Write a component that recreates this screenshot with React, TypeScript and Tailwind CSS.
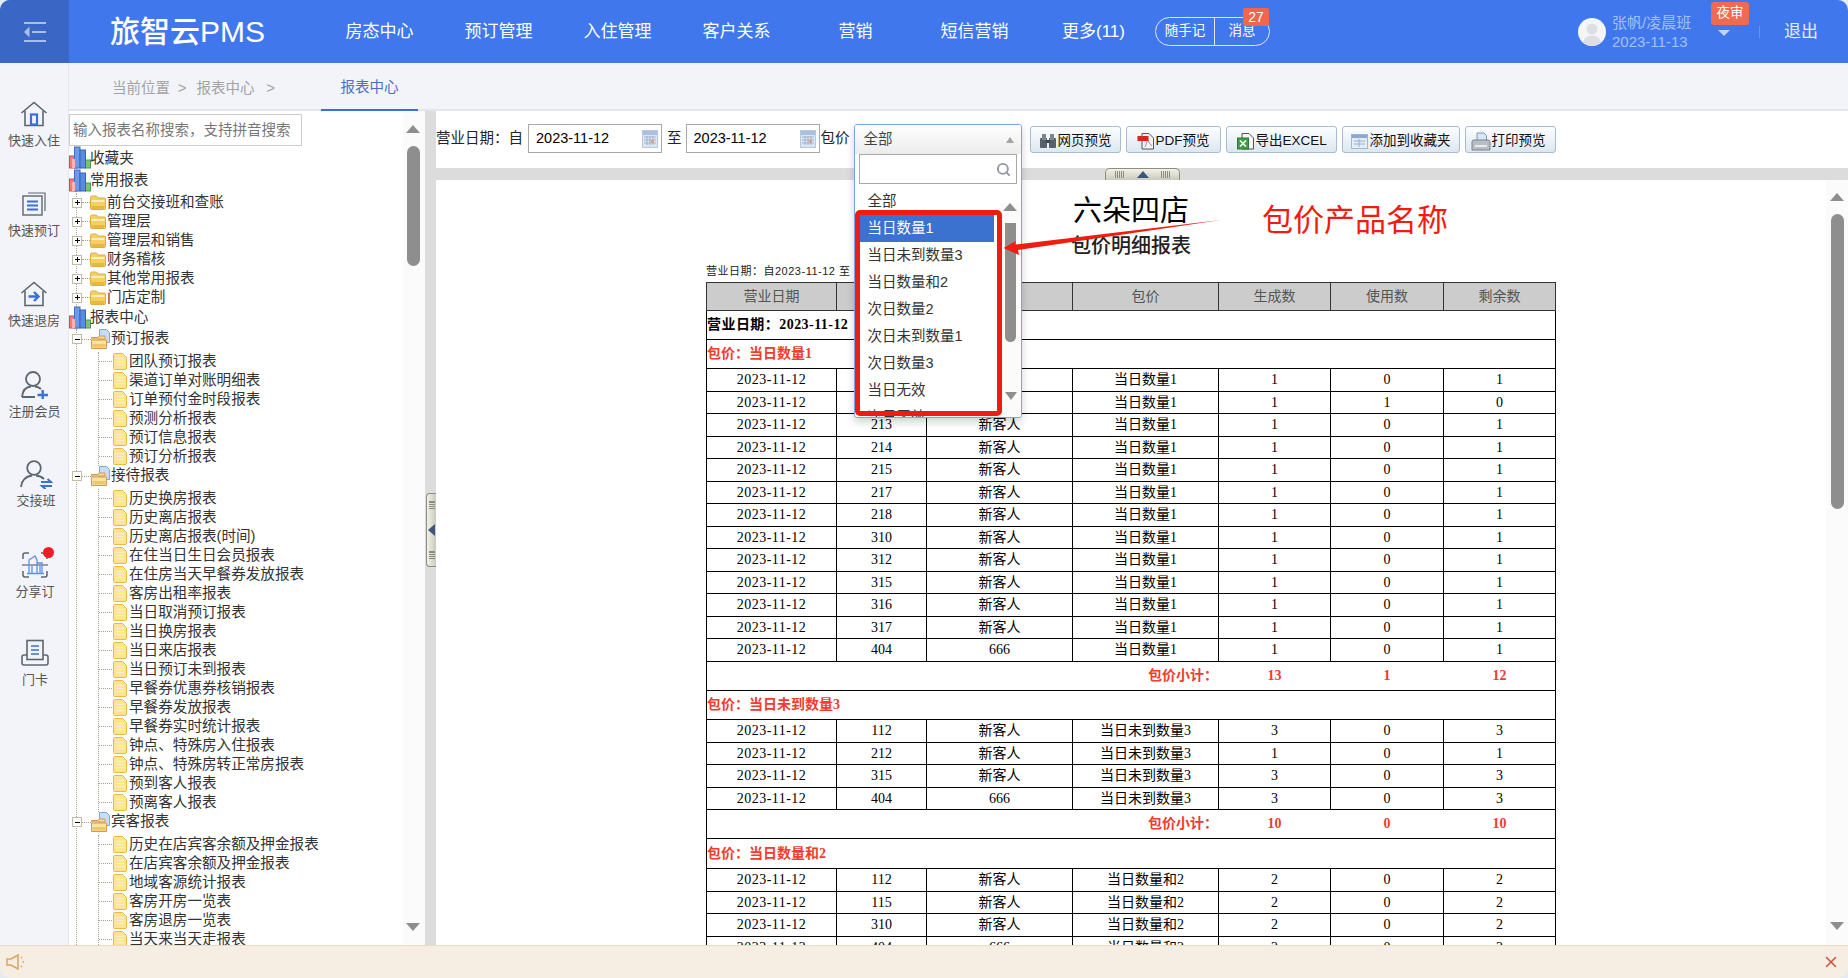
import { Search, X } from "lucide-react";

const sans = "font-['Liberation_Sans','Noto_Sans_CJK_SC',sans-serif]";
const serif = "font-['Liberation_Serif','Noto_Sans_CJK_SC',serif]";

const navItems = ["房态中心", "预订管理", "入住管理", "客户关系", "营销", "短信营销", "更多(11)"];

function RootIcon() {
  return (
    <svg width="22" height="24" viewBox="0 0 22 24" className="shrink-0">
      <rect x="0.5" y="10" width="8" height="12" fill="#f47c7c" stroke="#d9484c" />
      <rect x="16.5" y="14" width="5" height="8" fill="#7cc07a" stroke="#4c9a54" />
      <rect x="5.5" y="1" width="5.5" height="21" fill="#6d9bea" stroke="#3f6fc4" />
      <rect x="11" y="4" width="5.5" height="18" fill="#5a8ae4" stroke="#3562b8" />
      <rect x="3" y="13" width="3" height="9" fill="#fbb5b5" />
    </svg>
  );
}

function FolderIcon() {
  return (
    <svg width="16" height="16" viewBox="0 0 16 16" className="shrink-0">
      <path d="M0.5 2.5 Q0.5 1 2 1 H6.5 L8 3 H14.5 Q15.5 3 15.5 4 V13.5 Q15.5 14.5 14.5 14.5 H1.5 Q0.5 14.5 0.5 13.5 Z" fill="#f6cf62" stroke="#dcae4a" />
      <path d="M1.5 5 H14.5 V7 H1.5 Z" fill="#fdf0c0" />
      <path d="M1.5 11 H14.5 V14 H1.5 Z" fill="#e9b93e" />
    </svg>
  );
}

function FileIcon() {
  return (
    <svg width="14" height="17" viewBox="0 0 14 17" className="shrink-0">
      <path d="M1.5 0.5 H9.5 L13.5 4.5 V15 Q13.5 16.5 12 16.5 H1.5 Q0.5 16.5 0.5 15.5 V1.5 Q0.5 0.5 1.5 0.5 Z" fill="#fde591" stroke="#eab942" />
      <path d="M3 5.5 H11 M3 8.5 H11 M3 11.5 H11" stroke="#f7efcf" strokeWidth="1" />
    </svg>
  );
}

function OpenFolderIcon() {
  return (
    <svg width="19" height="20" viewBox="0 0 19 20" className="shrink-0">
      <path d="M8.5 0.5 H15.5 L18.5 3.5 V13.5 H8.5 Z" fill="#c7dcf6" stroke="#80a7dc" />
      <path d="M0.5 8.5 H7 L8 7 H14 V10 H0.5 Z" fill="#f7dc96" stroke="#d49a52" />
      <path d="M0.5 11 H15.5 V19.5 H0.5 Z" fill="#fbe3a0" stroke="#d49a52" />
      <path d="M1.5 15 H14.5 V18.5 H1.5 Z" fill="#efc76a" />
    </svg>
  );
}

function PlusMinus({ open }: { open?: boolean }) {
  return (
    <span className="relative -ml-[5px] h-[10px] w-[10px] shrink-0 border border-[#c2bba8] bg-white">
      <span className="absolute left-[1.5px] top-[3.5px] h-[1px] w-[5px] bg-black" />
      {!open && <span className="absolute left-[3.5px] top-[1.5px] h-[5px] w-[1px] bg-black" />}
    </span>
  );
}

function RootRow({ label, className }: { label: string; className: string }) {
  return (
    <div className={"flex items-center " + className}>
      <RootIcon />
      <span className="-ml-[1px]">{label}</span>
    </div>
  );
}

function Folder({ label }: { label: string }) {
  return (
    <div className="flex h-[19px] items-center">
      <PlusMinus />
      <span className="w-[8px] border-t border-dotted border-[#a8a08c]" />
      <FolderIcon />
      <span className="ml-[1px]">{label}</span>
    </div>
  );
}

function Group({ label, items }: { label: string; items: string[] }) {
  return (
    <div>
      <div className="flex h-[23px] items-center pb-[3px]">
        <PlusMinus open />
        <span className="w-[9px] border-t border-dotted border-[#a8a08c]" />
        <OpenFolderIcon />
        <span className="ml-[1px] -mt-[1px]">{label}</span>
      </div>
      <div className="ml-[21px] border-l border-dotted border-[#a8a08c]">
        {items.map((name) => (
          <div key={name} className="flex h-[19px] items-center whitespace-nowrap">
            <span className="w-[13px] border-t border-dotted border-[#a8a08c]" />
            <span className="ml-[1px]"><FileIcon /></span>
            <span className="ml-[2px]">{name}</span>
          </div>
        ))}
      </div>
    </div>
  );
}

function Tree() {
  return (
    <div className="relative h-full w-[356px] shrink-0 overflow-hidden bg-white">
      <div className="mt-[3px] flex h-[32px] w-[233px] items-center border border-[#cccccc] pl-[3px] pt-[2px] text-[14.5px] text-[#777]">输入报表名称搜索，支持拼音搜索</div>
      <div className="mt-[1px] text-[14.6px] leading-none text-[#333]">
        <RootRow label="收藏夹" className="h-[22px]" />
        <RootRow label="常用报表" className="h-[23px]" />
        <div className="ml-[7px] mt-[1px] border-l border-dotted border-[#a8a08c]">
          <Folder label="前台交接班和查账" />
          <Folder label="管理层" />
          <Folder label="管理层和销售" />
          <Folder label="财务稽核" />
          <Folder label="其他常用报表" />
          <Folder label="门店定制" />
        </div>
        <RootRow label="报表中心" className="-mt-[1px] h-[23px]" />
        <div className="ml-[7px] border-l border-dotted border-[#a8a08c]">
          <Group label="预订报表" items={["团队预订报表", "渠道订单对账明细表", "订单预付金时段报表", "预测分析报表", "预订信息报表", "预订分析报表"]} />
          <Group label="接待报表" items={["历史换房报表", "历史离店报表", "历史离店报表(时间)", "在住当日生日会员报表", "在住房当天早餐券发放报表", "客房出租率报表", "当日取消预订报表", "当日换房报表", "当日来店报表", "当日预订未到报表", "早餐券优惠券核销报表", "早餐券发放报表", "早餐券实时统计报表", "钟点、特殊房入住报表", "钟点、特殊房转正常房报表", "预到客人报表", "预离客人报表"]} />
          <Group label="宾客报表" items={["历史在店宾客余额及押金报表", "在店宾客余额及押金报表", "地域客源统计报表", "客房开房一览表", "客房退房一览表", "当天来当天走报表"]} />
        </div>
      </div>
      <div className="absolute bottom-0 right-0 top-0 w-[22px] bg-[#fbfbfb]">
        <span className="absolute left-[3px] top-[14px] h-0 w-0 border-x-[7.5px] border-b-[8px] border-x-transparent border-b-[#8e8e8e]" />
        <span className="absolute left-[4px] top-[35px] h-[120px] w-[13px] rounded-full bg-[#8e8e8e]" />
        <span className="absolute bottom-[14px] left-[3px] h-0 w-0 border-x-[7.5px] border-t-[8px] border-x-transparent border-t-[#8e8e8e]" />
      </div>
    </div>
  );
}

function CalendarIcon() {
  return (
    <svg width="16" height="18" viewBox="0 0 16 18">
      <rect x="0.5" y="0.5" width="15" height="17" fill="#dbe6f4" stroke="#b9c8dc" />
      <rect x="1" y="1" width="14" height="4" fill="#a9c0e0" />
      <path d="M2 7 H14 M2 10 H14 M2 13 H14 M5 6 V15 M8 6 V15 M11 6 V15" stroke="#9fb4d2" strokeWidth="1" />
      <rect x="9" y="10" width="3" height="3" fill="#e79a8a" />
    </svg>
  );
}

function DateInput() {
  return (
    <div className="flex h-[29px] w-[134px] items-center justify-between border border-[#a9a9a9] pl-[7px] pr-[3px] text-[14.5px] text-black">
      <span className="font-['Liberation_Sans']">2023-11-12</span>
      <CalendarIcon />
    </div>
  );
}

function BtnIcon({ kind }: { kind: string }) {
  if (kind === "web")
    return (
      <svg width="18" height="16" viewBox="0 0 18 16">
        <rect x="1" y="5" width="7" height="10" rx="1" fill="#54606a" />
        <rect x="10" y="5" width="7" height="10" rx="1" fill="#54606a" />
        <rect x="3" y="1" width="4" height="6" fill="#7b858d" />
        <rect x="11" y="1" width="4" height="6" fill="#7b858d" />
        <rect x="7" y="7" width="4" height="3" fill="#3f474e" />
      </svg>
    );
  if (kind === "pdf")
    return (
      <svg width="18" height="18" viewBox="0 0 18 18">
        <path d="M5 1.5 H12 L16.5 6 V17 H5 Z" fill="#f3f3f3" stroke="#555" />
        <path d="M8 15 Q11 9 10 6 Q12 12 15 14" fill="none" stroke="#999" />
        <rect x="0.5" y="4" width="11" height="5" fill="#d9261c" />
      </svg>
    );
  if (kind === "excel")
    return (
      <svg width="18" height="18" viewBox="0 0 18 18">
        <path d="M5 1.5 H12 L16.5 6 V17 H5 Z" fill="#f5f5f5" stroke="#555" />
        <rect x="0.5" y="6" width="11" height="11" fill="#3f9e45" stroke="#2a7a32" />
        <path d="M3 8.5 L9 14.5 M9 8.5 L3 14.5" stroke="#fff" strokeWidth="1.6" />
      </svg>
    );
  if (kind === "fav")
    return (
      <svg width="18" height="16" viewBox="0 0 18 16">
        <rect x="0.5" y="1.5" width="16" height="14" fill="#e4ecf7" stroke="#a5b5cc" />
        <rect x="1" y="2" width="15" height="3" fill="#8aa8d4" />
        <path d="M3 8 H14 M3 11 H14 M8 6 V14" stroke="#9db0ca" />
      </svg>
    );
  return (
    <svg width="20" height="19" viewBox="0 0 20 19">
      <path d="M6 1 H13 L15.5 3.5 V9 H6 Z" fill="#d7e5f7" stroke="#7e98bd" />
      <path d="M1 10 Q1 8 3 8 H17 Q19 8 19 10 V18 H1 Z" fill="#b9bec4" stroke="#7b8087" />
      <rect x="4" y="13" width="12" height="2" fill="#e8eaec" />
    </svg>
  );
}

function ToolButton({ kind, label, className }: { kind: string; label: string; className: string }) {
  return (
    <button className={"mt-[2px] flex h-[27px] items-center gap-[1px] rounded-[3px] border border-[#a9bccd] bg-gradient-to-b from-[#fdfefe] to-[#dce7f1] text-[13.5px] text-[#111] " + className}>
      <span className="mt-[3px] flex items-center"><BtnIcon kind={kind} /></span>
      <span className="mt-[1px] whitespace-nowrap">{label}</span>
    </button>
  );
}

function Dropdown() {
  const options = ["当日未到数量3", "当日数量和2", "次日数量2", "次日未到数量1", "次日数量3", "当日无效", "次日无效"];
  return (
    <div className="relative h-[29px] w-[168px] shrink-0">
      <div className="absolute left-0 top-0 z-20 h-[294px] w-full overflow-hidden rounded-[3px] border border-[#78a5ec] bg-white shadow-[0_4px_8px_rgba(0,0,0,0.18)]">
        <div className="flex h-[29px] items-center justify-between bg-gradient-to-b from-white to-[#ececec] pl-[9px] pr-[7px] text-[14.5px] text-[#444]">
          <span>全部</span>
          <span className="h-0 w-0 border-x-[4px] border-b-[6px] border-x-transparent border-b-[#a3a3a3]" />
        </div>
        <div className="mx-[4px] flex h-[30px] items-center justify-end border border-[#a9a9a9] pr-[5px]">
          <Search size={15} strokeWidth={3} color="#8f979f" />
        </div>
        <div className="pl-[5px] pt-[4px] text-[14.5px] leading-none text-[#333]">
          <div className="flex h-[27px] items-center pl-[8px]">全部</div>
          <div className="flex h-[27px] w-[134px] items-center bg-[#3b72d0] pl-[8px] text-white">当日数量1</div>
          {options.map((o) => (
            <div key={o} className="flex h-[27px] items-center pl-[8px]">{o}</div>
          ))}
        </div>
        <div className="absolute bottom-0 right-0 top-[78px] w-[21px] bg-[#fbfbfb]">
          <span className="absolute left-[3px] top-[0px] h-0 w-0 border-x-[7.5px] border-b-[8px] border-x-transparent border-b-[#8e8e8e]" />
          <span className="absolute left-[5px] top-[20px] h-[119px] w-[11px] rounded-b-full bg-[#8e8e8e]" />
          <span className="absolute left-[5px] top-[189px] h-0 w-0 border-x-[6px] border-t-[8px] border-x-transparent border-t-[#8e8e8e]" />
        </div>
      </div>
      {/* 标注红框 */}
      <div className="absolute left-[1px] top-[86px] z-30 h-[206px] w-[147px] rounded-[5px] border-[5px] border-[#f01c10]" />
    </div>
  );
}

function Row({ tall, cells }: { tall: boolean; cells: (string | number)[] }) {
  return (
    <tr className={tall ? "h-[23px]" : "h-[22px]"}>
      <td className="border border-black p-0 text-center tracking-[0.45px]">2023-11-12</td>
      {cells.map((c, i) => (
        <td key={i} className="border border-black p-0 text-center">{c}</td>
      ))}
    </tr>
  );
}

function Subtotal({ a, b, c }: { a: number; b: number; c: number }) {
  return (
    <tr className="h-[29px] font-bold text-[#f33b2e]">
      <td colSpan={4} className="border border-black border-r-transparent p-0 text-right">包价小计：</td>
      <td className="border border-x-transparent border-y-black p-0 text-center">{a}</td>
      <td className="border border-x-transparent border-y-black p-0 text-center">{b}</td>
      <td className="border border-y-black border-l-transparent border-r-black p-0 text-center">{c}</td>
    </tr>
  );
}

function PackageRow({ name, tall }: { name: string; tall?: boolean }) {
  return (
    <tr className={tall ? "h-[30px]" : "h-[29px]"}>
      <td colSpan={7} className="border border-black p-0 font-bold text-[#f33b2e]">包价：{name}</td>
    </tr>
  );
}

function ReportTable() {
  const first = [
    ["211", "新客人", 1, 0, 1], ["212", "新客人", 1, 1, 0], ["213", "新客人", 1, 0, 1], ["214", "新客人", 1, 0, 1],
    ["215", "新客人", 1, 0, 1], ["217", "新客人", 1, 0, 1], ["218", "新客人", 1, 0, 1], ["310", "新客人", 1, 0, 1],
    ["312", "新客人", 1, 0, 1], ["315", "新客人", 1, 0, 1], ["316", "新客人", 1, 0, 1], ["317", "新客人", 1, 0, 1],
    ["404", "666", 1, 0, 1],
  ];
  const second = [["112", "新客人", 3, 0, 3], ["212", "新客人", 1, 0, 1], ["315", "新客人", 3, 0, 3], ["404", "666", 3, 0, 3]];
  const third = [["112", "新客人", 2, 0, 2], ["115", "新客人", 2, 0, 2], ["310", "新客人", 2, 0, 2], ["404", "666", 2, 0, 2]];
  const withName = (r: (string | number)[], name: string) => [r[0], r[1], name, r[2], r[3], r[4]];
  return (
    <table className={"w-[849px] table-fixed border-collapse text-[14px] leading-none text-black " + serif}>
      <colgroup>
        <col className="w-[130px]" />
        <col className="w-[90px]" />
        <col className="w-[146px]" />
        <col className="w-[146px]" />
        <col className="w-[112px]" />
        <col className="w-[113px]" />
        <col className="w-[112px]" />
      </colgroup>
      <tbody>
        <tr className="h-[28px] bg-[#cccccc] font-normal text-[#555]">
          {["营业日期", "房号", "客人", "包价", "生成数", "使用数", "剩余数"].map((h) => (
            <td key={h} className="border border-[#333] p-0 text-center">{h}</td>
          ))}
        </tr>
        <tr className="h-[29px]">
          <td colSpan={7} className="border border-black p-0 font-bold tracking-[0.45px]">营业日期：2023-11-12</td>
        </tr>
        <PackageRow name="当日数量1" />
        {first.map((r, i) => <Row key={i} tall={i % 2 === 0} cells={withName(r, "当日数量1")} />)}
        <Subtotal a={13} b={1} c={12} />
        <PackageRow name="当日未到数量3" />
        {second.map((r, i) => <Row key={i} tall={i % 2 === 0} cells={withName(r, "当日未到数量3")} />)}
        <Subtotal a={10} b={0} c={10} />
        <PackageRow name="当日数量和2" tall />
        {third.map((r, i) => <Row key={i} tall={i % 2 === 0} cells={withName(r, "当日数量和2")} />)}
      </tbody>
    </table>
  );
}

function SideIcon({ kind }: { kind: string }) {
  const gray = "#5c6670";
  const blue = "#3b6fd9";
  if (kind === "in")
    return (
      <svg width="28" height="26" viewBox="0 0 28 26" fill="none">
        <path d="M1.5 12 L14 1.5 L26.5 12" stroke={gray} strokeWidth="1.6" />
        <path d="M5 10 V24.5 H23 V10" stroke={gray} strokeWidth="1.6" />
        <rect x="11" y="13.5" width="6" height="10" stroke={blue} strokeWidth="2.2" />
      </svg>
    );
  if (kind === "book")
    return (
      <svg width="24" height="24" viewBox="0 0 24 24" fill="none">
        <rect x="1" y="4" width="19" height="19" stroke={gray} strokeWidth="1.4" />
        <path d="M6 1 H23 V19" stroke={gray} strokeWidth="1.2" />
        <path d="M5 9.5 H16 M5 13.5 H16 M5 17.5 H16" stroke={blue} strokeWidth="2" />
      </svg>
    );
  if (kind === "out")
    return (
      <svg width="28" height="26" viewBox="0 0 28 26" fill="none">
        <path d="M1.5 12 L14 1.5 L26.5 12" stroke={gray} strokeWidth="1.6" />
        <path d="M5 10 V24.5 H23 V10" stroke={gray} strokeWidth="1.6" />
        <path d="M8.5 15.5 H18 M14 11 L18.5 15.5 L14 20" stroke={blue} strokeWidth="2.4" />
      </svg>
    );
  if (kind === "member")
    return (
      <svg width="28" height="28" viewBox="0 0 28 28" fill="none">
        <circle cx="12" cy="8" r="7" stroke={gray} strokeWidth="1.8" />
        <path d="M1 26 Q2 16 10 15.5 M14 15.5 Q18 16 20 18 M1 26 H14" stroke={gray} strokeWidth="1.8" />
        <path d="M16.5 24 H27 M21.7 19 V28" stroke={blue} strokeWidth="2.4" />
      </svg>
    );
  if (kind === "shift")
    return (
      <svg width="33" height="29" viewBox="0 0 33 29" fill="none">
        <circle cx="14" cy="8" r="6.8" stroke={gray} strokeWidth="1.8" />
        <path d="M1 27 Q2 17 12 15.5 M16 15.5 Q21 16 24 19" stroke={gray} strokeWidth="1.8" />
        <path d="M21 22 H31 L27.5 19 M32 26 H22 L25.5 29" stroke={blue} strokeWidth="2" />
      </svg>
    );
  if (kind === "share")
    return (
      <svg width="26" height="26" viewBox="0 0 26 26" fill="none">
        <path d="M1 7 V3 Q1 1 3 1 H7 M19 1 H23 Q25 1 25 3 V7 M1 19 V23 Q1 25 3 25 H7 M19 25 H23 Q25 25 25 23 V19" stroke={gray} strokeWidth="1.5" />
        <path d="M0 13 H26" stroke={gray} strokeWidth="1.2" />
        <path d="M7 21 V8 L13 4 L15 8 V21 M15 11 H20 V21 M5 21.5 H22 M10 14 V21 M18 14 V21" stroke="#5f8fec" strokeWidth="1.3" />
      </svg>
    );
  return (
    <svg width="28" height="28" viewBox="0 0 28 28" fill="none">
      <path d="M6 16 H3 Q1 16 1 18 V24 Q1 26 3 26 H25 Q27 26 27 24 V18 Q27 16 25 16 H22" stroke={gray} strokeWidth="1.6" />
      <rect x="6" y="1.5" width="16" height="19" stroke={gray} strokeWidth="1.6" />
      <path d="M10 7 H18 M10 11 H18 M10 15 H18" stroke={blue} strokeWidth="1.6" />
    </svg>
  );
}

function SideItem({ kind, label, className }: { kind: string; label: string; className: string }) {
  return (
    <div className={"relative flex flex-col items-center gap-[4px] " + className}>
      <div className="flex h-[28px] items-center justify-center"><SideIcon kind={kind} /></div>
      <div className="flex h-[18px] items-center whitespace-nowrap text-[13px] text-[#555]">{label}</div>
      {kind === "share" && <span className="absolute left-[41px] top-[-4px] h-[11px] w-[11px] rounded-full bg-[#ee1c25]" />}
    </div>
  );
}

export default function App() {
  return (
    <div className="h-[978px] w-[1848px] overflow-hidden bg-[#e4ebf2]">
      <div className={"relative flex h-full w-full flex-col overflow-hidden rounded-[10px] " + sans}>
        {/* 顶部导航 */}
        <header className="flex h-[63px] shrink-0 items-center bg-[#4177ed] text-white">
          <div className="flex h-full w-[69px] shrink-0 items-center justify-center bg-[#3a66c6]">
            <svg width="24" height="24" viewBox="0 0 24 24" fill="none" stroke="#a9bfe8" strokeWidth="2">
              <path d="M1 3 H23 M9 12 H23 M1 21 H23" />
              <path d="M6 7.5 L1.5 12 L6 16.5 Z" fill="#a9bfe8" strokeWidth="1" />
            </svg>
          </div>
          <div className="ml-[41px] w-[210px] text-[30px] font-medium leading-none">旅智云PMS</div>
          <nav className="flex text-[17px]">
            {navItems.map((n) => (
              <div key={n} className="w-[119px] text-center">{n}</div>
            ))}
          </nav>
          <div className="relative ml-[2px] flex h-[29px] w-[115px] items-center rounded-full border border-[#dfe8fb] text-[13.5px]">
            <div className="w-[58px] text-center">随手记</div>
            <div className="h-full w-[1px] bg-[#dfe8fb]" />
            <div className="flex-1 text-center">消息</div>
            <span className="absolute left-[87px] top-[-10px] flex h-[18px] w-[26px] items-center justify-center rounded-[2px] bg-[#f0654b] text-[14px] font-medium">27</span>
          </div>
          <svg width="28" height="28" viewBox="0 0 28 28" className="ml-[308px] shrink-0">
            <circle cx="14" cy="14" r="14" fill="#f4f5f7" />
            <circle cx="14" cy="11" r="5.5" fill="#dcdee3" />
            <path d="M5 24 Q7 17.5 14 17.5 Q21 17.5 23 24 Q19 28 14 28 Q9 28 5 24 Z" fill="#dcdee3" />
          </svg>
          <div className="ml-[6px] w-[99px] text-[#a5c0f6]">
            <div className="whitespace-nowrap text-[15px] leading-[19px]">张帆/凌晨班</div>
            <div className="text-[15px] leading-[19px]">2023-11-13</div>
          </div>
          <div className="relative h-full w-[38px] shrink-0">
            <span className="absolute left-0 top-[2px] flex h-[23px] w-[38px] items-center justify-center rounded-[3px] bg-[#ef6a4f] text-[13.5px] text-white">夜审</span>
            <span className="absolute left-[7px] top-[30px] h-0 w-0 border-x-[6px] border-t-[6px] border-x-transparent border-t-[#c2d4f8]" />
          </div>
          <span className="ml-[10px] h-[12px] w-[1px] bg-[#6b93ee]" />
          <div className="ml-[24px] text-[17px] text-[#e6eefc]">退出</div>
        </header>

        <div className="flex min-h-0 flex-1">
          {/* 左侧快捷栏 */}
          <aside className="flex w-[69px] shrink-0 flex-col border-r border-[#e2e6ee] bg-[#f2f4f9] pt-[37px]">
            <SideItem kind="in" label="快速入住" className="" />
            <SideItem kind="book" label="快速预订" className="mt-[40px]" />
            <SideItem kind="out" label="快速退房" className="mt-[40px]" />
            <SideItem kind="member" label="注册会员" className="ml-[1px] mt-[41px]" />
            <SideItem kind="shift" label="交接班" className="ml-[4px] mt-[39px]" />
            <SideItem kind="share" label="分享订" className="ml-[2px] mt-[41px]" />
            <SideItem kind="card" label="门卡" className="ml-[2px] mt-[38px]" />
          </aside>

          <div className="flex min-w-0 flex-1 flex-col">
            {/* 面包屑 */}
            <div className="flex h-[48px] shrink-0 items-center border-b-2 border-[#e3e5ea] bg-[#f2f4f9] text-[14.5px] text-[#a3a3a3]">
              <span className="ml-[43px] mt-[5px] whitespace-nowrap">当前位置</span>
              <span className="ml-[8px] mt-[5px]">&gt;</span>
              <span className="ml-[10px] mt-[5px] whitespace-nowrap">报表中心</span>
              <span className="ml-[12px] mt-[5px]">&gt;</span>
              <div className="-mb-[2px] ml-[46px] flex h-[48px] w-[97px] items-center justify-center border-b-2 border-[#3b6fd9] pt-[3px] text-[#4a6fc7]">报表中心</div>
            </div>
            <div className="flex min-h-0 flex-1">
              <Tree />
              <div className="relative w-[11px] shrink-0 bg-[#dcdcdc]">
                <div className="absolute left-[1px] top-[382px] flex h-[74px] w-[10px] flex-col items-center justify-between rounded-l-[4px] border border-r-0 border-[#8f8f80] bg-gradient-to-r from-[#f2f2ea] to-[#c9c9bb] py-[7px]">
                  <span className="h-[8px] w-[6px] border-y border-[#8c8c80] bg-[repeating-linear-gradient(to_bottom,#8c8c80_0,#8c8c80_1px,transparent_1px,transparent_2px)]" />
                  <span className="h-0 w-0 border-y-[6px] border-r-[7px] border-y-transparent border-r-[#3d5576]" />
                  <span className="h-[8px] w-[6px] border-y border-[#8c8c80] bg-[repeating-linear-gradient(to_bottom,#8c8c80_0,#8c8c80_1px,transparent_1px,transparent_2px)]" />
                </div>
              </div>
              <section className="relative flex min-w-0 flex-1 flex-col overflow-hidden bg-white">
                {/* 查询条件 */}
                <div className="flex h-[57px] shrink-0 items-start pt-[13px] text-[14.5px] leading-[29px] text-[#222]">
                  <span className="whitespace-nowrap">营业日期：自</span>
                  <div className="ml-[5px]"><DateInput /></div>
                  <span className="ml-[5px]">至</span>
                  <div className="ml-[4px]"><DateInput /></div>
                  <span className="ml-[1px] w-[33px]">包价</span>
                  <Dropdown />
                  <ToolButton kind="web" label="网页预览" className="ml-[8px] w-[91px] pl-[8px]" />
                  <ToolButton kind="pdf" label="PDF预览" className="ml-[5px] w-[95px] pl-[10px]" />
                  <ToolButton kind="excel" label="导出EXCEL" className="ml-[5px] w-[111px] pl-[10px]" />
                  <ToolButton kind="fav" label="添加到收藏夹" className="ml-[5px] w-[118px] pl-[8px]" />
                  <ToolButton kind="print" label="打印预览" className="ml-[5px] w-[91px] pl-[5px]" />
                </div>
                <div className="relative h-[12px] shrink-0 bg-[#dcdcdc]">
                  <div className="absolute left-[669px] top-0 flex h-[12px] w-[75px] items-center justify-center gap-[12px] rounded-t-[5px] border border-b-0 border-[#8f8f80] bg-gradient-to-b from-[#f2f2ea] to-[#c9c9bb]">
                    <span className="h-[7px] w-[10px] bg-[repeating-linear-gradient(to_right,#8c8c80_0,#8c8c80_1px,transparent_1px,transparent_2px)]" />
                    <span className="h-0 w-0 border-x-[6px] border-b-[7px] border-x-transparent border-b-[#3d5576]" />
                    <span className="h-[7px] w-[10px] bg-[repeating-linear-gradient(to_right,#8c8c80_0,#8c8c80_1px,transparent_1px,transparent_2px)]" />
                  </div>
                </div>
                {/* 报表内容 */}
                <div className="relative min-h-0 flex-1 overflow-hidden">
                  <div className="ml-[270px] w-[850px] pt-[13px]">
                    <div className="flex h-[36px] items-center justify-center text-[29px] leading-none text-black">六朵四店</div>
                    <div className="mt-[4px] flex h-[26px] items-center justify-center text-[20px] font-medium leading-none text-[#222]">包价明细报表</div>
                    <div className="mt-[5px] flex h-[14px] items-center text-[11px] leading-none tracking-[0.5px] text-[#222]">营业日期：自2023-11-12 至 2023-11-12</div>
                    <div className="mt-[4px]"><ReportTable /></div>
                  </div>
                  <div className="absolute bottom-0 right-0 top-0 w-[22px] bg-[#fbfbfb]">
                    <span className="absolute left-[4px] top-[13px] h-0 w-0 border-x-[7.5px] border-b-[8px] border-x-transparent border-b-[#8e8e8e]" />
                    <span className="absolute left-[5px] top-[34px] h-[295px] w-[13px] rounded-full bg-[#8e8e8e]" />
                    <span className="absolute bottom-[15px] left-[4px] h-0 w-0 border-x-[7.5px] border-t-[8px] border-x-transparent border-t-[#8e8e8e]" />
                  </div>
                </div>
              </section>
            </div>
          </div>
        </div>

        {/* 公告栏 */}
        <footer className="flex h-[33px] shrink-0 items-center justify-between border-t border-[#e6dcc8] bg-[#f6eee2] px-[6px]">
          <svg width="20" height="16" viewBox="0 0 20 16" fill="none" stroke="#dba55e" strokeWidth="1.5">
            <path d="M1 5 H5 L12 1 V15 L5 11 H1 Z" />
            <path d="M15 3 L16 4 M16.5 8 H18 M15 13 L16 12" />
          </svg>
          <X size={18} color="#d0503e" strokeWidth={2} className="mr-[2px]" />
        </footer>

        {/* 截图标注 */}
        <svg width="226" height="42" viewBox="0 0 226 42" className="absolute left-[1000px] top-[215px] z-40">
          <polygon points="3.5,33 16,26 15,29.5 221,5 18,35 19,40" fill="#f01c10" />
        </svg>
        <div className="absolute left-[1262px] top-[201px] z-40 text-[31px] leading-[40px] text-[#f01c10]">包价产品名称</div>
      </div>
    </div>
  );
}
